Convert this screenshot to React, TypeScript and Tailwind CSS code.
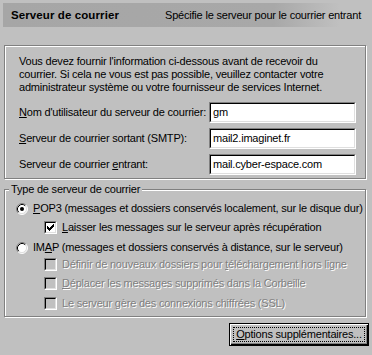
import React from 'react'

const font = { fontFamily: '"Liberation Sans", Arial, sans-serif' }

function Radio({ checked }: { checked?: boolean }) {
  return (
    <svg width="12" height="12" viewBox="0 0 12 12" className="shrink-0">
      <circle cx="6" cy="6" r="5" fill="#fff" />
      <path d="M2.11 9.89 A5.5 5.5 0 0 1 9.89 2.11" fill="none" stroke="#808080" strokeWidth="1" />
      <path d="M9.89 2.11 A5.5 5.5 0 0 1 2.11 9.89" fill="none" stroke="#fff" strokeWidth="1" />
      <path d="M2.82 9.18 A4.5 4.5 0 0 1 9.18 2.82" fill="none" stroke="#000" strokeWidth="1" />
      <path d="M9.18 2.82 A4.5 4.5 0 0 1 2.82 9.18" fill="none" stroke="#dfdfdf" strokeWidth="1" />
      {checked && <circle cx="6" cy="6" r="2" fill="#000" />}
    </svg>
  )
}

function Check({ checked, disabled }: { checked?: boolean; disabled?: boolean }) {
  return (
    <div className="w-[13px] h-[13px] shrink-0 border border-t-[#808080] border-l-[#808080] border-r-white border-b-white">
      <div
        className={`w-full h-full border border-t-black border-l-black border-r-[#dfdfdf] border-b-[#dfdfdf] ${
          disabled ? 'bg-[#c0c0c0]' : 'bg-white'
        } flex items-center justify-center`}
      >
        {checked && (
          <svg width="7" height="7" viewBox="0 0 7 7" shapeRendering="crispEdges">
            <path
              d="M6 0h1v3h-1v1h-1v1h-1v1h-1v1h-1v-1h-1v-1h-1v-3h1v1h1v1h1v-1h1v-1h1z"
              fill="#000"
            />
          </svg>
        )}
      </div>
    </div>
  )
}

function Field({ value }: { value: string }) {
  return (
    <div className="w-[147px] h-[21px] shrink-0 border border-t-[#808080] border-l-[#808080] border-r-white border-b-white">
      <div className="w-full h-full bg-white border border-t-black border-l-black border-r-[#dfdfdf] border-b-[#dfdfdf] pl-[2px] leading-[17px] text-black">
        {value}
      </div>
    </div>
  )
}

const etched = 'border border-[#808080] shadow-[inset_1px_1px_0_#fff,1px_1px_0_#fff]'
const dim = 'text-[#808080] [text-shadow:1px_1px_0_#fff]'

export default function App() {
  return (
    <div
      className="w-[372px] h-[355px] bg-[#c0c0c0] pt-[3px] px-[3px] text-[11px] leading-[13px] tracking-[-0.2px] text-black overflow-hidden whitespace-nowrap"
      style={font}
    >
      <div className="h-[24px] flex items-center bg-[linear-gradient(90deg,#a6a6a6_0%,#a8a8a8_74%,#c0c0c0_92%)]">
        <span className="w-[162px] shrink-0 pl-[8px] font-bold text-[11.5px] tracking-[0.1px]">Serveur de courrier</span>
        <span>Spécifie le serveur pour le courrier entrant</span>
      </div>

      <div className={`mt-[18px] ml-[1px] w-[362px] h-[134px] ${etched} pt-[9px] pl-[14px] pr-[9px]`}>
        <p>
          Vous devez fournir l'information ci-dessous avant de recevoir du
          <br />
          courrier. Si cela ne vous est pas possible, veuillez contacter votre
          <br />
          administrateur système ou votre fournisseur de services Internet.
        </p>
        <div className="mt-[8px] flex flex-col gap-[5px]">
          <div className="flex items-center justify-between">
            <span>
              <u>N</u>om d'utilisateur du serveur de courrier:
            </span>
            <Field value="gm" />
          </div>
          <div className="flex items-center justify-between">
            <span>
              <u>S</u>erveur de courrier sortant (SMTP):
            </span>
            <Field value="mail2.imaginet.fr" />
          </div>
          <div className="flex items-center justify-between">
            <span>
              Serveur de courrier <u>e</u>ntrant:
            </span>
            <Field value="mail.cyber-espace.com" />
          </div>
        </div>
      </div>

      <div className={`relative mt-[10px] ml-[1px] w-[362px] h-[128px] ${etched}`}>
        <span className="absolute left-[4px] -top-[7px] px-[2px] bg-[#c0c0c0]">Type de serveur de courrier</span>
        <div className="mt-[12px] ml-[11px] h-[13px] flex items-center gap-[5px]">
          <Radio checked />
          <span>
            <u>P</u>OP3 (messages et dossiers conservés localement, sur le disque dur)
          </span>
        </div>
        <div className="mt-[6px] ml-[39px] h-[13px] flex items-center gap-[5px]">
          <Check checked />
          <span>
            <u>L</u>aisser les messages sur le serveur après récupération
          </span>
        </div>
        <div className="mt-[7px] ml-[11px] h-[13px] flex items-center gap-[5px]">
          <Radio />
          <span>
            IM<u>A</u>P (messages et dossiers conservés à distance, sur le serveur)
          </span>
        </div>
        <div className="mt-[4px] ml-[39px] h-[13px] flex items-center gap-[5px]">
          <Check disabled />
          <span className={dim}>
            Définir de nouveaux dossiers pour <u>t</u>éléchargement hors ligne
          </span>
        </div>
        <div className="mt-[6px] ml-[39px] h-[13px] flex items-center gap-[5px]">
          <Check disabled />
          <span className={dim}>
            <u>D</u>éplacer les messages supprimés dans la Corbeille
          </span>
        </div>
        <div className="mt-[7px] ml-[39px] h-[13px] flex items-center gap-[5px]">
          <Check disabled />
          <span className={dim}>
            Le serveur <u>g</u>ère des connexions chiffrées (SSL)
          </span>
        </div>
      </div>

      <div className="mt-[6px] flex justify-end">
        <div className="w-[140px] h-[23px] border border-black bg-[#c0c0c0] shadow-[inset_1px_1px_0_#fff,inset_-1px_-1px_0_#000,inset_-2px_-2px_0_#808080] p-[3px]">
          <div className="w-full h-full border border-dotted border-black flex items-center justify-center leading-[13px]">
            <span>
              <u>O</u>ptions supplémentaires...
            </span>
          </div>
        </div>
      </div>
    </div>
  )
}
